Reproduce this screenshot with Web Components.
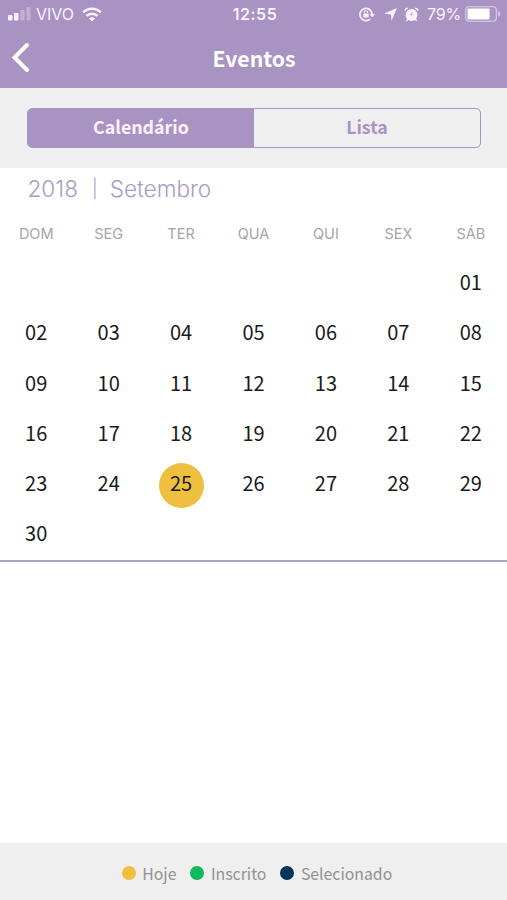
<!DOCTYPE html>
<html lang="pt-BR">
<head>
<meta charset="utf-8">
<meta name="viewport" content="width=device-width, initial-scale=1">
<title>Eventos</title>
<style>
  :root {
    --purple: #a993c3;
    --panel: #efefef;
    --today: #efbf40;
    --enrolled: #0dbb5e;
    --selected: #04355b;
    --font-app: "Noto Sans CJK SC", "Open Sans", sans-serif;
    --font-system: Inter, Roboto, sans-serif;
  }
  body {
    margin: 0;
    background: #fff;
  }
</style>
</head>
<body>
<events-page>
  <status-bar slot="status" carrier="VIVO" time="12:55" battery="79"></status-bar>
  <nav-header slot="header">Eventos</nav-header>
  <segmented-control slot="tabs">
    <segment-item active>Calendário</segment-item>
    <segment-item>Lista</segment-item>
  </segmented-control>
  <month-calendar year="2018" month="9" today="25"></month-calendar>
  <calendar-legend slot="footer">
    <legend-item style="--dot: var(--today)">Hoje</legend-item>
    <legend-item style="--dot: var(--enrolled)">Inscrito</legend-item>
    <legend-item style="--dot: var(--selected)">Selecionado</legend-item>
  </calendar-legend>
</events-page>

<script>
class EventsPage extends HTMLElement {
  connectedCallback() {
    this.attachShadow({ mode: 'open' }).innerHTML = `
      <style>
        :host {
          display: flex;
          flex-direction: column;
          height: 100vh;
          min-height: 900px;
          font-family: var(--font-app);
        }
        header {
          height: 88px;
          background: var(--purple);
          color: #fff;
        }
        .tabs {
          box-sizing: border-box;
          height: 80px;
          padding: 20px 26px 0 27px;
          background: var(--panel);
        }
        main {
          flex: 1;
        }
      </style>
      <header>
        <slot name="status"></slot>
        <slot name="header"></slot>
      </header>
      <div class="tabs"><slot name="tabs"></slot></div>
      <main><slot></slot></main>
      <slot name="footer"></slot>
    `;
  }
}

class StatusBar extends HTMLElement {
  connectedCallback() {
    const battery = Number(this.getAttribute('battery'));
    this.attachShadow({ mode: 'open' }).innerHTML = `
      <style>
        :host {
          display: grid;
          grid-template-columns: 1fr auto 1fr;
          align-items: center;
          height: 28px;
          padding: 0 6px 0 8px;
          font-family: var(--font-system);
          font-size: 16px;
          line-height: 28px;
          color: #fbf2ff;
        }
        svg {
          display: block;
        }
        .left, .right {
          display: flex;
          align-items: center;
        }
        .right {
          justify-content: flex-end;
        }
        .carrier {
          margin: 0 8px 0 5px;
        }
        .time {
          margin-left: 1px;
          font-weight: 600;
          letter-spacing: 0.5px;
        }
        .level {
          margin: 0 4px 0 8px;
          letter-spacing: -0.2px;
        }
      </style>
      <div class="left">
        <svg width="23" height="14" viewBox="0 0 23 14" fill="currentColor">
          <rect x="0" y="8" width="4.5" height="5.5" rx="1"/>
          <rect x="6" y="6" width="4.5" height="7.5" rx="1"/>
          <rect x="12.5" y="3" width="4" height="10.5" rx="1" opacity=".3"/>
          <rect x="18.5" y="0" width="4" height="13.5" rx="1" opacity=".3"/>
        </svg>
        <span class="carrier">${this.getAttribute('carrier')}</span>
        <svg width="20" height="15" viewBox="0 0 20 15" fill="none" stroke="currentColor" stroke-width="2.6">
          <path d="M1.2 5.4a12.6 12.6 0 0 1 17.6 0"/>
          <path d="M4.5 8.9a8 8 0 0 1 11 0"/>
          <path d="M10 14.6l-3-3a4.3 4.3 0 0 1 6 0z" fill="currentColor" stroke="none"/>
        </svg>
      </div>
      <span class="time">${this.getAttribute('time')}</span>
      <div class="right">
        <svg width="16" height="15" viewBox="0 0 16 15" fill="none" stroke="currentColor">
          <path d="M11.3 12A6.1 6.1 0 1 1 13.2 7.5" stroke-width="1.7"/>
          <path d="M10.6 7h5.2l-2.6 3.4z" fill="currentColor" stroke="none"/>
          <rect x="4.3" y="6.4" width="5.4" height="4.2" rx=".5" fill="currentColor" stroke="none"/>
          <path d="M5.3 6.6V5.4a1.7 1.7 0 0 1 3.4 0v1.2" stroke-width="1.1"/>
        </svg>
        <svg style="margin-left:9px" width="13" height="13" viewBox="0 0 13 13" fill="currentColor">
          <path d="M12.9.1L7.6 12.9 7 6.5.1 5.6z"/>
        </svg>
        <svg style="margin-left:7px" width="15" height="15" viewBox="0 0 15 15" fill="none" stroke="currentColor">
          <circle cx="7.5" cy="8" r="6" fill="currentColor" stroke="none"/>
          <path d="M1 3.6A3 3 0 0 1 3.7 1.2M14 3.6a3 3 0 0 0-2.7-2.4M3.6 12.4l-1.2 1.4M11.4 12.4l1.2 1.4" stroke-width="1.5"/>
          <path d="M7.8 5v3.4L6 7.4" stroke="var(--purple)" stroke-width=".8"/>
        </svg>
        <span class="level">${battery}%</span>
        <svg width="36" height="16" viewBox="0 0 36 16">
          <rect x=".7" y=".7" width="30.6" height="14.6" rx="3" fill="none" stroke="#dccfe9" stroke-width="1.1"/>
          <rect x="2.5" y="2.5" width="${(28 * battery / 100).toFixed(1)}" height="11" rx="1" fill="#fff"/>
          <path d="M33.2 5.3q2 .7 2 2.7t-2 2.7z" fill="#dccfe9"/>
        </svg>
      </div>
    `;
  }
}

class NavHeader extends HTMLElement {
  connectedCallback() {
    this.attachShadow({ mode: 'open' }).innerHTML = `
      <style>
        :host {
          display: grid;
          grid-template-columns: 40px 1fr 40px;
          align-items: center;
          height: 58px;
          font-size: 21.2px;
          font-weight: 700;
          line-height: 55px;
          text-align: center;
        }
        svg {
          display: block;
          margin-left: 11px;
        }
        span {
          padding-left: 1px;
        }
      </style>
      <svg width="20" height="30" viewBox="0 0 20 30" fill="none" stroke="currentColor" stroke-width="4">
        <path d="M16 3L3.5 15.5 16 28" stroke-linecap="round"/>
      </svg>
      <span><slot></slot></span>
    `;
  }
}

class SegmentedControl extends HTMLElement {
  connectedCallback() {
    this.attachShadow({ mode: 'open' }).innerHTML = `
      <style>
        :host {
          display: grid;
          grid-template-columns: 1fr 1fr;
          box-sizing: border-box;
          height: 40px;
          border: 1.5px solid var(--purple);
          border-radius: 5px;
          overflow: hidden;
        }
      </style>
      <slot></slot>
    `;
  }
}

class SegmentItem extends HTMLElement {
  connectedCallback() {
    this.attachShadow({ mode: 'open' }).innerHTML = `
      <style>
        :host {
          display: block;
          color: var(--purple);
          font-size: 17.8px;
          font-weight: 700;
          line-height: 35px;
          text-align: center;
        }
        :host([active]) {
          background: var(--purple);
          color: #fdf3ff;
        }
      </style>
      <slot></slot>
    `;
  }
}

class MonthCalendar extends HTMLElement {
  connectedCallback() {
    this.attachShadow({ mode: 'open' });
    this.render();
  }

  render() {
    const months = ['Janeiro', 'Fevereiro', 'Março', 'Abril', 'Maio', 'Junho', 'Julho',
      'Agosto', 'Setembro', 'Outubro', 'Novembro', 'Dezembro'];
    const weekdays = ['DOM', 'SEG', 'TER', 'QUA', 'QUI', 'SEX', 'SÁB'];
    const year = Number(this.getAttribute('year'));
    const month = Number(this.getAttribute('month'));
    const today = Number(this.getAttribute('today'));
    const firstWeekday = new Date(year, month - 1, 1).getDay();
    const dayCount = new Date(year, month, 0).getDate();
    const days = Array.from({ length: dayCount }, (_, i) => i + 1);

    this.shadowRoot.innerHTML = `
      <style>
        :host {
          display: block;
          border-bottom: 2px solid #aaa3c6;
        }
        .title {
          display: flex;
          height: 42px;
          padding-left: 27.5px;
          color: #aa9cc6;
          font: 350 22.6px/42px var(--font-system);
        }
        .bar {
          margin: 0 12px 0 14px;
          font-size: 18px;
        }
        .weekdays, .days {
          display: grid;
          grid-template-columns: repeat(7, 1fr);
          text-align: center;
        }
        .weekdays {
          height: 48px;
          color: #a5a5a8;
          font: 400 14.5px/48px var(--font-system);
        }
        .days {
          grid-auto-rows: 50.3px;
          color: #1a1a1a;
          font-size: 20px;
          line-height: 48px;
        }
        .day.first {
          grid-column-start: ${firstWeekday + 1};
        }
        .today span {
          display: block;
          width: 45px;
          height: 45px;
          margin: 4px auto 0;
          border-radius: 50%;
          background: var(--today);
          line-height: 40px;
        }
      </style>
      <div class="title">
        <span>${year}</span><span class="bar">|</span><span>${months[month - 1]}</span>
      </div>
      <div class="weekdays">${weekdays.map(name => `<span>${name}</span>`).join('')}</div>
      <div class="days">
        ${days.map(day => `
          <div class="day ${day === 1 ? 'first' : ''} ${day === today ? 'today' : ''}">
            <span>${String(day).padStart(2, '0')}</span>
          </div>
        `).join('')}
      </div>
    `;
  }
}

class CalendarLegend extends HTMLElement {
  connectedCallback() {
    this.attachShadow({ mode: 'open' }).innerHTML = `
      <style>
        :host {
          display: flex;
          justify-content: center;
          gap: 14px;
          box-sizing: border-box;
          height: 57px;
          padding: 0 0 0 7px;
          background: var(--panel);
        }
      </style>
      <slot></slot>
    `;
  }
}

class LegendItem extends HTMLElement {
  connectedCallback() {
    this.attachShadow({ mode: 'open' }).innerHTML = `
      <style>
        :host {
          display: flex;
          align-items: center;
          gap: 6.5px;
          height: 60px;
          color: #929292;
          font-size: 15.8px;
          line-height: 60px;
        }
        span {
          padding-top: 2px;
        }
        i {
          width: 14px;
          height: 14px;
          border-radius: 50%;
          background: var(--dot);
        }
      </style>
      <i></i><span><slot></slot></span>
    `;
  }
}

customElements.define('events-page', EventsPage);
customElements.define('status-bar', StatusBar);
customElements.define('nav-header', NavHeader);
customElements.define('segmented-control', SegmentedControl);
customElements.define('segment-item', SegmentItem);
customElements.define('month-calendar', MonthCalendar);
customElements.define('calendar-legend', CalendarLegend);
customElements.define('legend-item', LegendItem);
</script>
</body>
</html>
